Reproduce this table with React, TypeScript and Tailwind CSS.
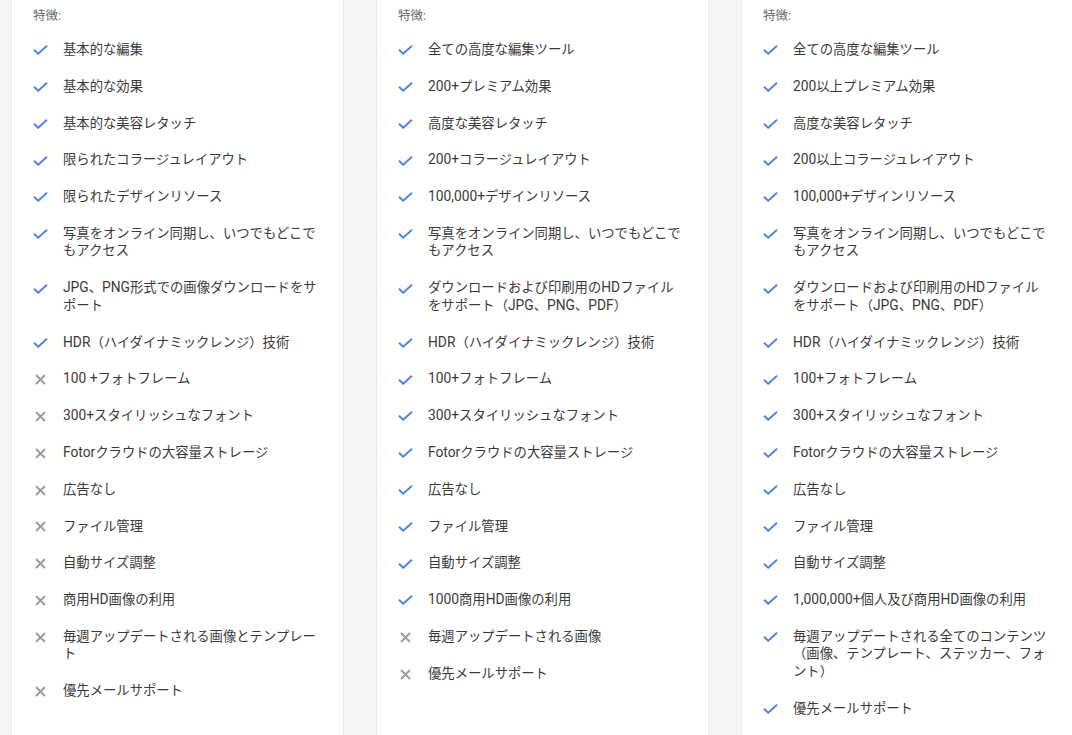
import React from "react";

type Item = { t: string; ok: boolean };

const col1: Item[] = [
  { t: "基本的な編集", ok: true },
  { t: "基本的な効果", ok: true },
  { t: "基本的な美容レタッチ", ok: true },
  { t: "限られたコラージュレイアウト", ok: true },
  { t: "限られたデザインリソース", ok: true },
  { t: "写真をオンライン同期し、いつでもどこで\nもアクセス", ok: true },
  { t: "JPG、PNG形式での画像ダウンロードをサ\nポート", ok: true },
  { t: "HDR（ハイダイナミックレンジ）技術", ok: true },
  { t: "100 +フォトフレーム", ok: false },
  { t: "300+スタイリッシュなフォント", ok: false },
  { t: "Fotorクラウドの大容量ストレージ", ok: false },
  { t: "広告なし", ok: false },
  { t: "ファイル管理", ok: false },
  { t: "自動サイズ調整", ok: false },
  { t: "商用HD画像の利用", ok: false },
  { t: "毎週アップデートされる画像とテンプレー\nト", ok: false },
  { t: "優先メールサポート", ok: false },
];

const col2: Item[] = [
  { t: "全ての高度な編集ツール", ok: true },
  { t: "200+プレミアム効果", ok: true },
  { t: "高度な美容レタッチ", ok: true },
  { t: "200+コラージュレイアウト", ok: true },
  { t: "100,000+デザインリソース", ok: true },
  { t: "写真をオンライン同期し、いつでもどこで\nもアクセス", ok: true },
  { t: "ダウンロードおよび印刷用のHDファイル\nをサポート（JPG、PNG、PDF）", ok: true },
  { t: "HDR（ハイダイナミックレンジ）技術", ok: true },
  { t: "100+フォトフレーム", ok: true },
  { t: "300+スタイリッシュなフォント", ok: true },
  { t: "Fotorクラウドの大容量ストレージ", ok: true },
  { t: "広告なし", ok: true },
  { t: "ファイル管理", ok: true },
  { t: "自動サイズ調整", ok: true },
  { t: "1000商用HD画像の利用", ok: true },
  { t: "毎週アップデートされる画像", ok: false },
  { t: "優先メールサポート", ok: false },
];

const col3: Item[] = [
  { t: "全ての高度な編集ツール", ok: true },
  { t: "200以上プレミアム効果", ok: true },
  { t: "高度な美容レタッチ", ok: true },
  { t: "200以上コラージュレイアウト", ok: true },
  { t: "100,000+デザインリソース", ok: true },
  { t: "写真をオンライン同期し、いつでもどこで\nもアクセス", ok: true },
  { t: "ダウンロードおよび印刷用のHDファイル\nをサポート（JPG、PNG、PDF）", ok: true },
  { t: "HDR（ハイダイナミックレンジ）技術", ok: true },
  { t: "100+フォトフレーム", ok: true },
  { t: "300+スタイリッシュなフォント", ok: true },
  { t: "Fotorクラウドの大容量ストレージ", ok: true },
  { t: "広告なし", ok: true },
  { t: "ファイル管理", ok: true },
  { t: "自動サイズ調整", ok: true },
  { t: "1,000,000+個人及び商用HD画像の利用", ok: true },
  { t: "毎週アップデートされる全てのコンテンツ\n（画像、テンプレート、ステッカー、フォ\nント）", ok: true },
  { t: "優先メールサポート", ok: true },
];

function Check() {
  return (
    <svg width="15" height="10" viewBox="0 0 15 10" className="block">
      <polyline points="1,4.8 5.2,8.8 14,0.8" fill="none" stroke="#4a86e0" strokeWidth="1.9" strokeLinecap="butt" strokeLinejoin="miter" />
    </svg>
  );
}

function Cross() {
  return (
    <svg width="11" height="11" viewBox="0 0 11 11" className="block">
      <path d="M1 1 L10 10 M10 1 L1 10" fill="none" stroke="#9c9c9c" strokeWidth="1.9" />
    </svg>
  );
}

function Rich({ text }: { text: string }) {
  const parts = text.split(/([A-Za-z0-9,+ ]+)/).filter((p) => p.length > 0);
  return (
    <>
      {parts.map((p, i) =>
        /^[A-Za-z0-9,+ ]+$/.test(p) ? (
          <span key={i} className="text-[13.8px]">{p}</span>
        ) : (
          <span key={i}>{p}</span>
        )
      )}
    </>
  );
}

function Card({ items }: { items: Item[] }) {
  return (
    <div className="w-[333px] shrink-0 h-[800px] bg-white border-x border-[#e9eaec] pl-[21px] pr-[20px] pt-[7px]">
      <div className="text-[12.5px] leading-[18px] text-[#6b6b6b]">特徴:</div>
      <ul className="mt-[16px] flex flex-col gap-[19.3px]">
        {items.map((it, i) => (
          <li key={i} className="flex items-start">
            <div className="w-[30px] shrink-0 h-[17.5px] flex items-center">
              {it.ok ? (
                <div className="pt-[1px]"><Check /></div>
              ) : (
                <div className="pl-[2px] pt-[1px]"><Cross /></div>
              )}
            </div>
            <div className="w-[256px] text-[13.33px] leading-[17.5px] text-[#3a3a3a]">
              {it.t.split("\n").map((line, j) => (
                <div key={j} className="whitespace-nowrap">
                  <Rich text={line} />
                </div>
              ))}
            </div>
          </li>
        ))}
      </ul>
    </div>
  );
}

export default function App() {
  return (
    <div
      className="w-[1072px] h-[735px] overflow-hidden bg-[#f4f5f7] flex gap-[32px] pl-[11px]"
      style={{ fontFamily: 'Roboto, "Noto Sans CJK JP", sans-serif' }}
    >
      <Card items={col1} />
      <Card items={col2} />
      <Card items={col3} />
    </div>
  );
}
